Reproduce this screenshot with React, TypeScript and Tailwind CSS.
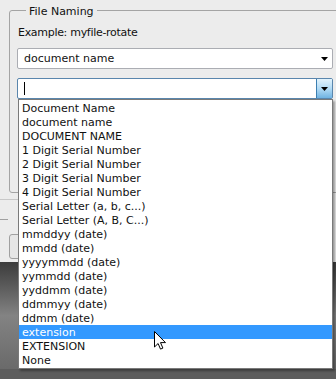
const options = [
  'Document Name',
  'document name',
  'DOCUMENT NAME',
  '1 Digit Serial Number',
  '2 Digit Serial Number',
  '3 Digit Serial Number',
  '4 Digit Serial Number',
  'Serial Letter (a, b, c...)',
  'Serial Letter (A, B, C...)',
  'mmddyy (date)',
  'mmdd (date)',
  'yyyymmdd (date)',
  'yymmdd (date)',
  'yyddmm (date)',
  'ddmmyy (date)',
  'ddmm (date)',
  'extension',
  'EXTENSION',
  'None',
];

function Arrow() {
  return (
    <svg width="7" height="4" viewBox="0 0 7 4">
      <path d="M0 0h7L3.5 4z" fill="#000" />
    </svg>
  );
}

export default function App() {
  const selected = 'extension';

  return (
    <div className="relative w-[336px] h-[379px] overflow-hidden bg-[#5e5e5e] font-['DejaVu_Sans',sans-serif] text-[11px] text-[#111]">
      {/* Dialog */}
      <div className="relative h-[262px] pt-[10px] bg-[#ececec]">
        <div className="relative ml-[9px] w-[340px] h-[183px] border border-[#a4a4a4] rounded-[3px] pl-[7px] pt-[15px]">
          <span className="absolute -top-[5px] left-[16px] px-[3px] bg-[#ececec] leading-[12px]">File Naming</span>
          <div className="ml-[1px] leading-[14px] tracking-[-0.3px]">Example: myfile-rotate</div>

          <div className="mt-[8px] w-[316px] h-[21px] flex items-center justify-between bg-white border border-[#abadb3] rounded-[2px] pl-[6px] pr-[4px]">
            <span className="pt-px">document name</span>
            <Arrow />
          </div>

          <div className="mt-[9px] w-[316px] h-[21px] flex items-stretch bg-white border border-[#5a86ad] rounded-[2px]">
            <div className="flex-1 flex items-center pl-[6px]">
              <span className="w-px h-[13px] bg-black" />
            </div>
            <div className="w-[16px] flex items-center justify-center border-l border-[#3c7fb1] bg-gradient-to-b from-[#e3f3fc] via-[#b2dbf5] to-[#6fb3e2]">
              <Arrow />
            </div>
          </div>
        </div>

        {/* partly hidden controls further down */}
        <div className="mt-[6px] w-[18px] h-px bg-[#c8c8c8]" />
        <div className="mt-[19px] w-[8px] h-px bg-[#a0a0a0]" />
        <div className="mt-[14px] ml-[9px] w-[60px] h-[25px] border border-[#a0a0a0] rounded-[3px] bg-[#e6e6e6]" />
      </div>

      {/* Desktop behind the dialog */}
      <div className="h-[107px] bg-gradient-to-b from-[#3c3c3c] via-[#838383] to-[#6a6a6a]" />
      <div className="h-[10px] bg-[#5d5d5d]" />

      {/* Open dropdown list */}
      <div className="absolute top-[99px] left-[18px] w-[315px] h-[270px] bg-white border border-[#7a7a7a] py-px shadow-[2px_2px_2px_rgba(0,0,0,0.35)]">
        {options.map(o => (
          <div
            key={o}
            className={`h-[14px] leading-[14px] pt-px pl-[3px] whitespace-nowrap ${
              o === selected ? 'bg-[#3399ff] text-white' : ''
            }`}
          >
            {o}
          </div>
        ))}
      </div>

      {/* Mouse pointer */}
      <svg className="absolute left-[154px] top-[331px]" width="13" height="20" viewBox="0 0 13 20">
        <path
          d="M0.5 0.5v15.5l3.6-3.5 2.4 5.6 2.4-1-2.4-5.5h5z"
          fill="#fff"
          stroke="#000"
          strokeWidth="1"
          strokeLinejoin="round"
        />
      </svg>
    </div>
  );
}
